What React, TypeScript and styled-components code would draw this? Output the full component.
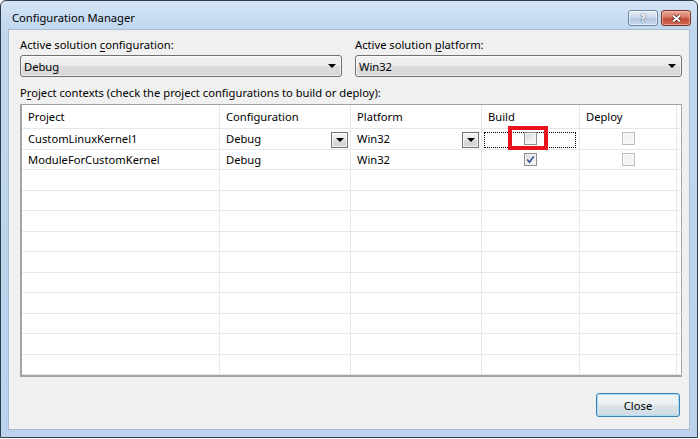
import React from "react";
import styled, { createGlobalStyle, css } from "styled-components";

const GlobalStyle = createGlobalStyle`
  html, body {
    margin: 0;
    padding: 0;
    background: #ffffff;
  }
  body {
    font-family: "Segoe UI", "Noto Sans", "Liberation Sans", sans-serif;
    font-size: 11.2px;
    color: #000000;
  }
`;

const Window = styled.div`
  box-sizing: border-box;
  width: 698px;
  height: 438px;
  display: flex;
  flex-direction: column;
  padding: 0 7px 7px 7px;
  border: 1px solid #2f3c4a;
  border-radius: 6px 6px 0 0;
  background: linear-gradient(180deg, #d4e4f5 0, #c0d7ef 28px, #bad2eb 100%);
`;

const TitleBar = styled.div`
  display: flex;
  align-items: flex-start;
  height: 28px;
  margin: 0 -7px;
  padding: 0 6px 0 11px;
`;

const Title = styled.span`
  flex: 1;
  padding-top: 9px;
  line-height: 16px;
  color: #000000;
`;

const CaptionButtons = styled.div`
  display: flex;
  gap: 3px;
  margin-top: 9px;
`;

const CaptionButton = styled.div<{ $close?: boolean }>`
  box-sizing: border-box;
  width: 30px;
  height: 16px;
  display: flex;
  align-items: center;
  justify-content: center;
  border-radius: 3px;
  font-family: "DejaVu Sans", sans-serif;
  font-weight: bold;
  font-size: 11px;
  color: #ffffff;
  text-shadow: 0 0 1px #3a4a5e, 0 0 1px #3a4a5e;
  ${(p) =>
    p.$close
      ? css`
          border: 1px solid #7a3126;
          background: linear-gradient(180deg, #e9a796 0, #d67a64 45%, #c44b35 55%, #cf6a52 100%);
          box-shadow: inset 0 0 0 1px rgba(255, 220, 210, 0.5);
        `
      : css`
          border: 1px solid #6f86a3;
          background: linear-gradient(180deg, #e6eef7 0, #cbdaeb 45%, #b4c8de 55%, #c4d6ea 100%);
          box-shadow: inset 0 0 0 1px rgba(255, 255, 255, 0.55);
        `}
`;

const Client = styled.div`
  flex: 1;
  display: flex;
  flex-direction: column;
  padding: 7px 7px 12px 11px;
  background: #f0f0f0;
  border: 1px solid #a9bcd1;
`;

const SolutionRow = styled.div`
  display: grid;
  grid-template-columns: 322px 1fr;
  column-gap: 13px;
`;

const Field = styled.div`
  display: flex;
  flex-direction: column;
  gap: 2px;
`;

const Label = styled.div<{ $spaced?: boolean }>`
  line-height: 16px;
  margin-top: ${(p) => (p.$spaced ? "8px" : "0")};
`;

const AccessKey = styled.u`
  text-decoration-thickness: 1px;
  text-underline-offset: 2px;
`;

const Combo = styled.div`
  box-sizing: border-box;
  height: 22px;
  display: flex;
  align-items: center;
  justify-content: space-between;
  padding: 0 5px 0 3px;
  border: 1px solid #707070;
  border-radius: 3px;
  background: linear-gradient(180deg, #f3f3f3 0, #ebebeb 50%, #dddddd 50%, #d6d6d6 100%);
  box-shadow: inset 0 0 0 1px rgba(255, 255, 255, 0.6);
`;

const Arrow = styled.span`
  width: 0;
  height: 0;
  border-left: 4px solid transparent;
  border-right: 4px solid transparent;
  border-top: 4px solid #000000;
`;

const Table = styled.div`
  display: grid;
  grid-template-columns: 198px 131px 131px 98px 97px 1fr;
  grid-template-rows: 24px;
  grid-auto-rows: 20.5px;
  margin-top: 3px;
  background: #ffffff;
  border: 1px solid #a3a3a3;
  border-bottom-width: 2px;
  border-left-width: 2px;
`;

const Cell = styled.div<{ $last?: boolean; $center?: boolean; $open?: boolean }>`
  position: relative;
  display: flex;
  align-items: center;
  justify-content: ${(p) => (p.$center ? "center" : "space-between")};
  padding: ${(p) => (p.$center ? "0" : "0 2px 0 6px")};
  border-right: ${(p) => (p.$last ? "none" : "1px solid #e3e8ee")};
  border-bottom: 1px solid #e3e8ee;
  white-space: nowrap;
  overflow: ${(p) => (p.$open ? "visible" : "hidden")};
  z-index: ${(p) => (p.$open ? 1 : "auto")};
`;

const CellDrop = styled.span`
  box-sizing: border-box;
  align-self: flex-end;
  margin-bottom: 1px;
  width: 17px;
  height: 16px;
  display: flex;
  align-items: center;
  justify-content: center;
  border: 1px solid #707070;
  background: linear-gradient(180deg, #f5f5f5 0, #e9e9e9 50%, #dadada 50%, #d2d2d2 100%);
  box-shadow: inset 0 0 0 1px rgba(255, 255, 255, 0.7);
`;

const FocusRect = styled.span`
  position: absolute;
  top: 3px;
  bottom: 1px;
  left: 2px;
  right: 3px;
  border: 1px dotted #000000;
  pointer-events: none;
`;

const CheckWrap = styled.span`
  position: relative;
  display: inline-flex;
  margin-left: -1px;
`;

const CheckBox = styled.span<{ $disabled?: boolean }>`
  box-sizing: border-box;
  width: 13px;
  height: 13px;
  display: flex;
  align-items: center;
  justify-content: center;
  border: 1px solid ${(p) => (p.$disabled ? "#bcbcbc" : "#8e8f8f")};
  background: ${(p) =>
    p.$disabled ? "#f4f4f4" : "linear-gradient(135deg, #d6d8db 0, #eeeeee 55%, #fbfbfb 100%)"};
  box-shadow: inset 0 0 0 1px ${(p) => (p.$disabled ? "#fafafa" : "#f3f3f3")};
`;

const Highlight = styled.span`
  position: absolute;
  box-sizing: border-box;
  left: -16px;
  top: -6px;
  width: 40px;
  height: 24px;
  border: 4px solid #e8131d;
  pointer-events: none;
`;

const Footer = styled.div`
  display: flex;
  justify-content: flex-end;
  margin-top: auto;
  padding-right: 2px;
`;

const PushButton = styled.button`
  box-sizing: border-box;
  width: 84px;
  height: 24px;
  padding: 0;
  font: inherit;
  color: #000000;
  border: 1px solid #3c7fb1;
  border-radius: 3px;
  background: linear-gradient(180deg, #f4f7f9 0, #eaeff2 45%, #dae3e9 55%, #cfdbe3 100%);
  box-shadow: inset 0 0 0 1px #a9dcf6;
`;

const Check = () => (
  <svg width="9" height="9" viewBox="0 0 9 9">
    <path d="M1.2 4.6 L3.4 7.2 L7.8 1.4" fill="none" stroke="#3c5591" strokeWidth="1.6" />
  </svg>
);

type Project = {
  name: string;
  config: string;
  platform: string;
  build: boolean;
  deploy: boolean;
  current?: boolean;
};

const projects: Project[] = [
  { name: "CustomLinuxKernel1", config: "Debug", platform: "Win32", build: false, deploy: false, current: true },
  { name: "ModuleForCustomKernel", config: "Debug", platform: "Win32", build: true, deploy: false },
];

const columns = ["Project", "Configuration", "Platform", "Build", "Deploy"];
const EMPTY_ROWS = 10;

export default function App() {
  return (
    <>
      <GlobalStyle />
      <Window>
        <TitleBar>
          <Title>Configuration Manager</Title>
          <CaptionButtons>
            <CaptionButton>?</CaptionButton>
            <CaptionButton $close>
              <svg width="11" height="9" viewBox="0 0 11 9">
                <path d="M2 1.5 L9 7.5 M9 1.5 L2 7.5" stroke="#4a1a12" strokeWidth="3.4" />
                <path d="M2 1.5 L9 7.5 M9 1.5 L2 7.5" stroke="#ffffff" strokeWidth="2" />
              </svg>
            </CaptionButton>
          </CaptionButtons>
        </TitleBar>

        <Client>
          <SolutionRow>
            <Field>
              <Label>
                Active solution <AccessKey>c</AccessKey>onfiguration:
              </Label>
              <Combo>
                <span>Debug</span>
                <Arrow />
              </Combo>
            </Field>
            <Field>
              <Label>
                Active solution <AccessKey>p</AccessKey>latform:
              </Label>
              <Combo>
                <span>Win32</span>
                <Arrow />
              </Combo>
            </Field>
          </SolutionRow>

          <Label $spaced>
            P<AccessKey>r</AccessKey>oject contexts (check the project configurations to build or deploy):
          </Label>

          <Table>
            {columns.map((c) => (
              <Cell key={c}>{c}</Cell>
            ))}
            <Cell $last />

            {projects.map((p) => (
              <React.Fragment key={p.name}>
                <Cell>{p.name}</Cell>
                <Cell>
                  {p.config}
                  {p.current && (
                    <CellDrop>
                      <Arrow />
                    </CellDrop>
                  )}
                </Cell>
                <Cell>
                  {p.platform}
                  {p.current && (
                    <CellDrop>
                      <Arrow />
                    </CellDrop>
                  )}
                </Cell>
                <Cell $center $open={p.current}>
                  {p.current && <FocusRect />}
                  <CheckWrap>
                    <CheckBox>{p.build && <Check />}</CheckBox>
                    {p.current && <Highlight />}
                  </CheckWrap>
                </Cell>
                <Cell $center>
                  <CheckBox $disabled>{p.deploy && <Check />}</CheckBox>
                </Cell>
                <Cell $last />
              </React.Fragment>
            ))}

            {Array.from({ length: EMPTY_ROWS }).map((_, i) => (
              <React.Fragment key={i}>
                <Cell />
                <Cell />
                <Cell />
                <Cell />
                <Cell />
                <Cell $last />
              </React.Fragment>
            ))}
          </Table>

          <Footer>
            <PushButton>Close</PushButton>
          </Footer>
        </Client>
      </Window>
    </>
  );
}
